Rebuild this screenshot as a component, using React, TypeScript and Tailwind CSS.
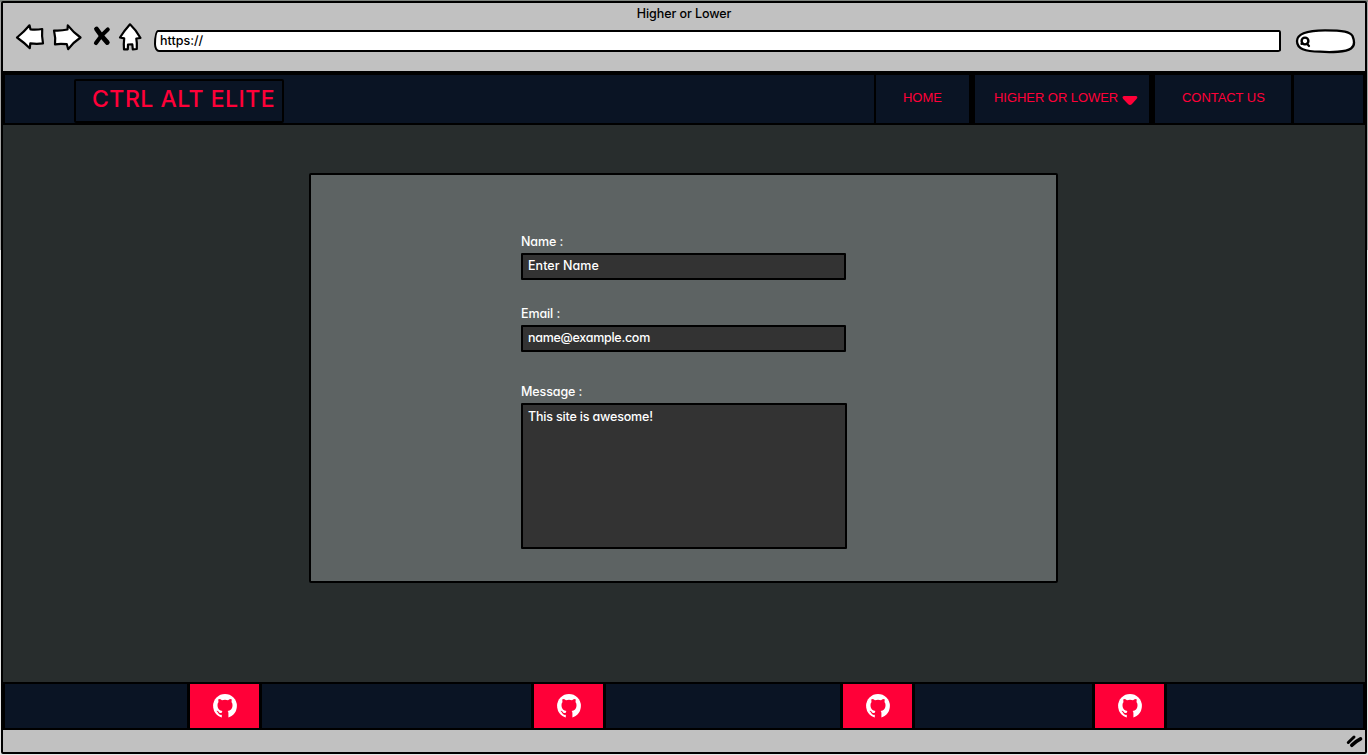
import type { ReactNode } from "react";

function NavCell({ className, children }: { className: string; children?: ReactNode }) {
  return (
    <div className={`flex h-[48px] shrink-0 items-start bg-[#0a1424] pt-[15px] font-['Liberation_Sans',sans-serif] text-[13px] leading-4 tracking-[-0.05px] whitespace-nowrap text-[#ff0038] ${className}`}>
      {children}
    </div>
  );
}

function BrowserBar() {
  return (
    <header className="h-[68px] shrink-0 bg-[#c1c1c1]">
      <h1 className="h-[18px] pt-[3px] text-center text-[12.5px] leading-4 font-medium">
        <span className="tracking-[-0.08px]">Higher or Lower</span>
      </h1>
      <div className="flex h-8 items-start">
        <svg
          className="h-8 w-[150px] shrink-0"
          viewBox="3 21 150 32"
          fill="white"
          stroke="black"
          strokeWidth="2.2"
          strokeLinejoin="round"
          strokeLinecap="round"
        >
          <path d="M17 37.5 Q24 32 29.5 25.3 L30.5 29.5 Q37 30 42.2 29 Q41.6 36 43 43.4 Q37 44.2 30.3 43.4 L29.8 48.2 Q24 42.5 17 37.5Z" />
          <path d="M54 30.5 Q61 31 67.5 29.5 L67.8 25.3 Q73 32 80.5 37.5 Q73 42.5 68.2 49.2 L66.8 44.2 Q60 43.6 55 44.3 Q55.8 38 54 30.5Z" />
          <path d="M96.5 29 Q101 36 107.3 42.5" strokeWidth="4.8" />
          <path d="M107.7 29.5 Q101 35 96 43" strokeWidth="4.2" />
          <path d="M130 24.3 Q124 31 120 37.5 L124.2 38.3 Q123.5 44 124 49.3 L127.8 49.3 L128 44.5 L132.3 44.3 L132.8 49.3 L136.8 49 Q137.2 43 136.3 38.5 L140.5 38 Q136 30 130 24.3Z" />
        </svg>
        <div className="mt-[9px] ml-px flex h-[22px] w-[1127px] items-center rounded-[4px_2px_5px_5px/14px_3px_2px_8px] border-2 border-black bg-white pl-[4px] text-[12.5px] leading-4 font-medium">
          https://
        </div>
        <svg className="mt-[6px] ml-[13px] h-[27px] w-[63px]" viewBox="1294 27 63 27" fill="white" stroke="black" strokeWidth="2.3" strokeLinecap="round">
          <path d="M1297 41 C1297 34 1305 30.5 1325 30.3 C1344 30.3 1350 32 1352.5 36 C1355 42 1354.5 46 1351 48.5 C1346 52 1331 52.6 1320 51.7 C1305 51.5 1297 49 1297 41Z" />
          <circle cx="1305" cy="41" r="3.4" strokeWidth="2.4" />
          <path d="M1303 43.5 L1301.5 43.8 M1307 43.7 L1309 46" strokeWidth="2.2" />
        </svg>
      </div>
    </header>
  );
}

function NavBar() {
  return (
    <nav className="flex h-[54px] shrink-0 items-start bg-black pt-[4px] pl-[2px]">
      <div className="flex h-[48px] w-[869px] bg-[#0a1424] pt-1 pl-[69px]">
        <div className="flex h-[44px] w-[210px] rounded-[2px] border-[2.5px] border-black pt-[2px] pl-4 text-[23px] leading-8 font-medium whitespace-nowrap text-[#ff0038]">
          <span className="tracking-[0.5px]">CTRL ALT ELITE</span>
        </div>
      </div>
      <NavCell className="ml-[2px] w-[93px] pl-[27px]">HOME</NavCell>
      <NavCell className="ml-[6px] w-[174px] pl-[19px]">
        HIGHER OR LOWER
        <svg className="mt-[5px] ml-auto mr-[11px] h-[11px] w-4 shrink-0" viewBox="0 0 16 11" fill="#ff0038">
          <path d="M2 1 H14 Q16.5 1.5 14.5 4 L10 9 Q8 11 6 9 L1.2 4 Q-0.5 1.5 2 1Z" />
        </svg>
      </NavCell>
      <NavCell className="ml-[6px] w-[136px] pl-[27px]">CONTACT US</NavCell>
      <NavCell className="ml-[3px] w-[69px]" />
    </nav>
  );
}

function Field({ label, value, className, boxClass }: { label: string; value: string; className: string; boxClass: string }) {
  return (
    <div className={`font-medium ${className}`}>
      <div className="h-[19px] text-[12.5px] leading-4 tracking-[-0.1px]">{label}</div>
      <div className={`rounded-[1px] border-[2.5px] border-black bg-[#333333] pl-[5px] text-[12.5px] leading-4 ${boxClass}`}>{value}</div>
    </div>
  );
}

function GithubTile({ className }: { className: string }) {
  return (
    <a className={`flex h-[48px] w-[75px] shrink-0 items-center justify-center rounded-[2px] border-x-[3px] border-y-2 border-black bg-[#ff0038] pb-px pl-px ${className}`}>
      <svg className="size-6" viewBox="0 0 24 24">
        <circle cx="12" cy="12" r="11.9" fill="white" />
        <path
          fill="#ff0038"
          d="M5.6 5 Q7.3 4.9 9 6.2 Q12 5.5 15 6.2 Q16.7 4.9 18.4 5 Q19 6.5 18.5 8.1 Q19.8 9.8 19.5 12 Q19 16.3 14.6 17 Q15.4 17.7 15.4 19 V24 H8.8 V20.8 Q6 21.3 5 18.8 Q4.5 17.6 3.5 17.1 Q3.2 16.6 4.2 16.7 Q5.2 17 6 18.2 Q6.9 19.5 8.8 18.8 Q8.8 17.7 9.5 17 Q5 16.3 4.5 12 Q4.2 9.8 5.5 8.1 Q5 6.5 5.6 5Z"
        />
      </svg>
    </a>
  );
}

export default function App() {
  return (
    <div className="h-[755px] w-[1368px] overflow-hidden bg-[linear-gradient(#7f8580_0_2px,#a5a5a5_2px_250px,#e5e5e5_250px)] pt-px pl-[1px] font-['Inter','Liberation_Sans',sans-serif] [font-feature-settings:'cv11'_1]">
      <div className="flex h-[753px] w-[1366px] flex-col rounded-[2px] border-2 border-black bg-[#282d2d]">
        <BrowserBar />
        <NavBar />
        <main className="flex h-[557px] shrink-0 justify-center pt-[48px] pr-px">
          <section className="h-[410px] w-[749px] rounded-[2px] border-[2.5px] border-black bg-[#5d6363] pt-[59px] pl-[209px] text-white">
            <Field className="h-[72px] pl-px" label="Name :" value="Enter Name" boxClass="h-[27px] w-[325px] pt-[3px] tracking-[0.05px]" />
            <Field className="h-[78px] pl-px" label="Email :" value="name@example.com" boxClass="h-[27px] w-[325px] pt-[3px] tracking-[-0.28px]" />
            <Field className="h-[170px] pl-px" label="Message :" value="This site is awesome!" boxClass="h-[146px] w-[326px] pt-[4px] tracking-[-0.18px]" />
          </section>
        </main>
        <footer className="flex h-[48px] shrink-0 border-y-2 border-r-[2px] border-l-2 border-black bg-[#0a1424]">
          <div className="-mt-[2px] flex">
            <GithubTile className="ml-[182px]" />
            <GithubTile className="ml-[269px]" />
            <GithubTile className="ml-[234px]" />
            <GithubTile className="ml-[177px]" />
          </div>
        </footer>
        <div className="flex grow items-center justify-end bg-[#c1c1c1] pr-[2px]">
          <svg className="h-4 w-[18px]" viewBox="1345 734 18 16" fill="none" stroke="black" strokeLinecap="round">
            <path d="M1348.3 743.5 L1354 738" strokeWidth="3" />
            <path d="M1351.8 746.3 Q1356 742 1360.5 739.8" strokeWidth="3.6" />
          </svg>
        </div>
      </div>
    </div>
  );
}
